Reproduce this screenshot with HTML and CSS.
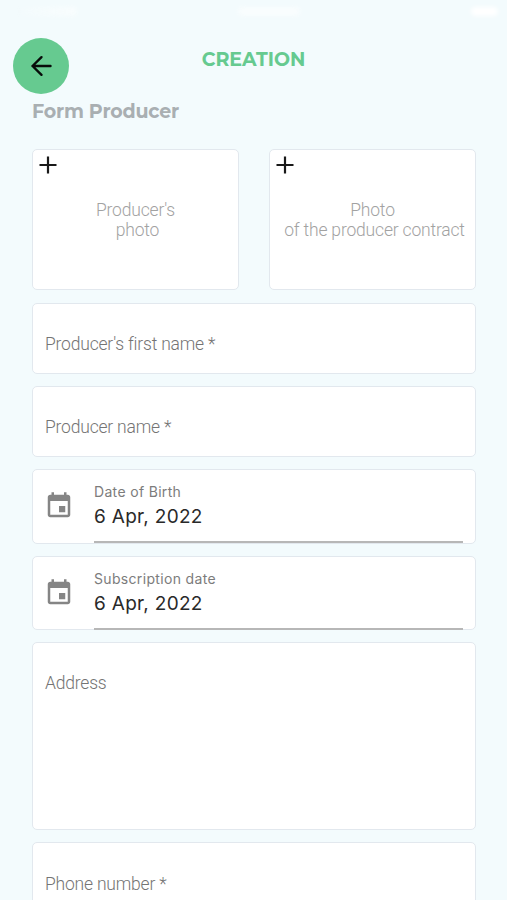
FILE: index.html
```html
<!DOCTYPE html>
<html lang="en">
<head>
<meta charset="utf-8">
<title>Creation</title>
<link rel="stylesheet" href="styles.css">
</head>
<body>
<div class="status"><i class="carrier"></i><i class="clock"></i><i class="battery"></i></div>
<header class="header">
  <button class="back" aria-label="Back"><svg width="22" height="22" viewBox="0 0 22 22"><path d="M20.500 11H2.500M11.500 2.200L2.500 11L11.500 19.800"/></svg></button>
  <h1 class="title">CREATION</h1>
</header>
<main class="form">
  <h2 class="subtitle">Form Producer</h2>
  <div class="photos">
    <div class="card photo">
      <svg class="plus" width="18" height="18" viewBox="0 0 18 18"><path d="M9 .5V17.5M.5 9H17.5"/></svg>
      <p class="caption">Producer's<br><span class="line">photo</span></p>
    </div>
    <div class="card photo">
      <svg class="plus" width="18" height="18" viewBox="0 0 18 18"><path d="M9 .5V17.5M.5 9H17.5"/></svg>
      <p class="caption">Photo<br><span class="line">of the producer contract</span></p>
    </div>
  </div>
  <div class="card field">Producer's first name *</div>
  <div class="card field">Producer name *</div>
  <div class="card date">
    <svg class="calendar" width="30" height="30" viewBox="0 0 24 24"><path d="M17 12h-5v5h5v-5zM16 1v2H8V1H6v2H5c-1.110 0-1.990.9-1.990 2L3 19c0 1.100.89 2 2 2h14c1.100 0 2-.9 2-2V5c0-1.100-.9-2-2-2h-1V1h-2zm3 18H5V8h14v11z"/></svg>
    <div class="value"><span class="label">Date of Birth</span><span class="day">6 Apr, 2022</span></div>
  </div>
  <div class="card date date-second">
    <svg class="calendar" width="30" height="30" viewBox="0 0 24 24"><path d="M17 12h-5v5h5v-5zM16 1v2H8V1H6v2H5c-1.110 0-1.990.9-1.990 2L3 19c0 1.100.89 2 2 2h14c1.100 0 2-.9 2-2V5c0-1.100-.9-2-2-2h-1V1h-2zm3 18H5V8h14v11z"/></svg>
    <div class="value"><span class="label">Subscription date</span><span class="day">6 Apr, 2022</span></div>
  </div>
  <div class="card field address">Address</div>
  <div class="card field phone">Phone number *</div>
</main>
</body>
</html>
```
FILE: styles.css
```css
* { box-sizing: border-box; }
html { height: 100%; overflow: hidden; }
body { margin: 0; height: 900px; overflow: hidden; background: #f3fbfd; font-family: Roboto, "Liberation Sans", sans-serif; }
.status { height: 24px; padding: 7px 9px 0 15px; display: flex; justify-content: space-between; }
.status i { height: 9px; border-radius: 5px; background: #fff; filter: blur(2px); opacity: .5; }
.carrier { width: 62px; }
.clock { width: 62px; margin-right: 10px; }
.battery { width: 27px; }
.status .carrier { background: linear-gradient(90deg, transparent, #fff); }
.status .battery { opacity: 1; }
.header { height: 70px; padding: 14px 13px 0; display: grid; grid-template-columns: 56px 1fr 56px; }
.back { width: 56px; height: 56px; padding: 0; border: 0; border-radius: 50%; background: #66ca90; display: flex; align-items: center; justify-content: center; }
.back svg { fill: none; stroke: #080c0a; stroke-width: 2.4; stroke-linecap: round; stroke-linejoin: round; }
.title { margin: 9px 0 0; text-align: center; font: 700 19px/25px Montserrat, Inter, sans-serif; color: #66ca90; white-space: nowrap; }
.form { padding: 0 31px 0 32px; }
.subtitle { margin: 5px 0 0; height: 50px; font: 700 19px/25px Montserrat, Inter, sans-serif; letter-spacing: -.18px; color: #a9afb2; }
.card { background: #fff; border: 1px solid #e2e8ee; border-radius: 5px; margin-bottom: 12px; }
.photos { display: grid; grid-template-columns: 207px 207px; justify-content: space-between; }
.photo { height: 141px; margin-bottom: 13px; padding: 6px; }
.plus { display: block; fill: none; stroke: #191919; stroke-width: 2.2; }
.caption { margin: 27px 0 0; text-align: center; font-size: 17.5px; line-height: 19.5px; font-weight: 300; letter-spacing: -.18px; color: #a2a2a2; white-space: nowrap; }
.line { margin-left: 4px; }
.field { height: 71px; padding: 29px 12px 0; font-size: 17.5px; line-height: 22px; font-weight: 300; letter-spacing: -.2px; color: #747474; }
.phone { padding-top: 30px; }
.date { height: 75px; padding: 0 12px; display: flex; }
.date-second { height: 74px; }
.calendar { margin: 21px 20px 0 -1px; fill: #858585; }
.value { flex: 1; height: 73px; padding-top: 13px; border-bottom: 2px solid #b7b7b7; display: flex; flex-direction: column; font-family: Inter, sans-serif; }
.label { font-size: 14px; line-height: 17px; color: #7c7c7c; letter-spacing: .33px; }
.day { margin-top: 4px; font-size: 19px; line-height: 26px; color: #292929; letter-spacing: .3px; }
.address { height: 188px; }
```
